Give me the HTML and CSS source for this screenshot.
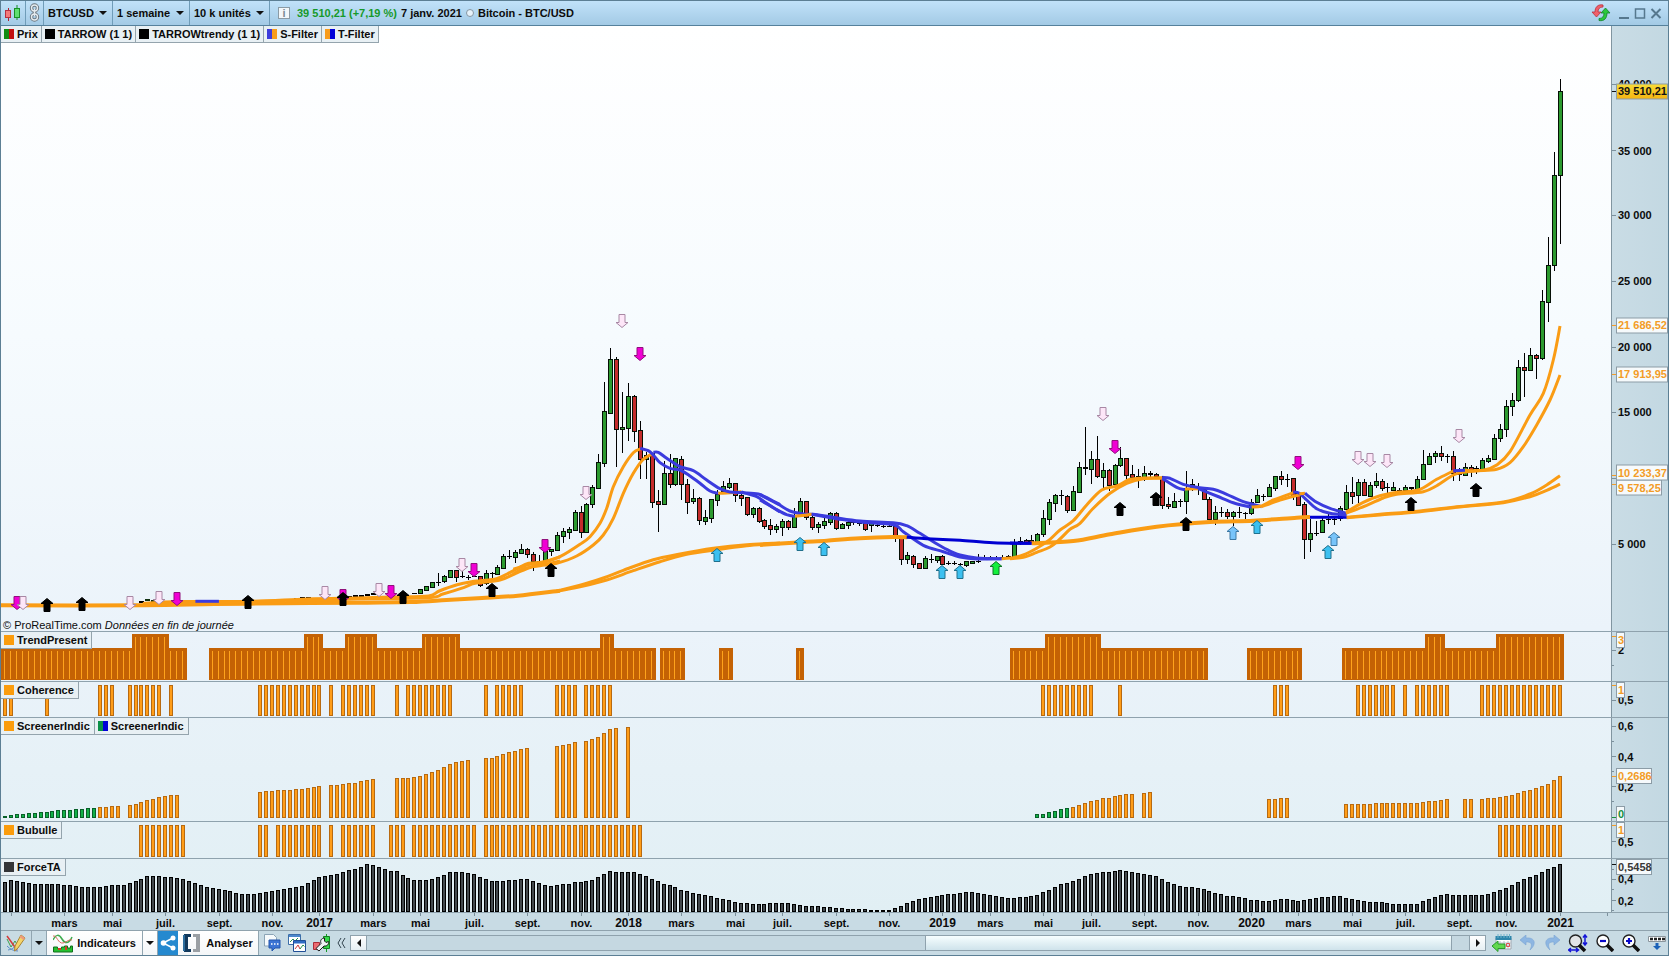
FILE: index.html
```html
<!DOCTYPE html>
<html lang="fr">
<head>
<meta charset="utf-8">
<title>Bitcoin - BTC/USD</title>
<link rel="stylesheet" href="styles.css">
</head>
<body>
<div class="window">
  <header class="topbar">
    <button class="cell icon-cell" aria-label="Style de graphique">
      <svg width="18" height="18" viewBox="0 0 18 18"><path d="M4.500 4v13" stroke="#b02030"/><rect x="1.500" y="6.500" width="5" height="7" fill="#f47a7a" stroke="#b83040"/><path d="M13 1v15" stroke="#189028"/><rect x="10.500" y="4.500" width="5" height="9" fill="#5fe070" stroke="#189028"/></svg>
    </button>
    <button class="cell link-cell" aria-label="Lier">
      <svg width="11" height="19" viewBox="0 0 11 19" fill="none"><g stroke="#6d7880" stroke-width="3.400"><rect x="2.500" y="2" width="6" height="6" rx="3"/><rect x="2.500" y="11" width="6" height="6" rx="3"/><path d="M5.500 6v7"/></g><g stroke="#e4ebef" stroke-width="1.400"><rect x="2.500" y="2" width="6" height="6" rx="3"/><rect x="2.500" y="11" width="6" height="6" rx="3"/><path d="M5.500 6v7"/></g></svg>
    </button>
    <label class="cell pick"><select aria-label="Valeur"><option>BTCUSD</option></select></label>
    <label class="cell pick"><select aria-label="Unité de temps"><option>1 semaine</option></select></label>
    <label class="cell pick"><select aria-label="Historique"><option>10 k unités</option></select></label>
    <div class="quote">
      <button class="info" aria-label="Informations">i</button>
      <span class="up">39 510,21 (+7,19 %)</span>
      <span>7 janv. 2021</span>
      <i class="dot"></i>
      <span>Bitcoin - BTC/USD</span>
    </div>
    <div class="wincontrols">
      <button aria-label="Actualiser"><svg width="20" height="18" viewBox="0 0 20 18"><path d="M12 1C7 0 4 3 4 8H1l4.500 5L10 8H7c0-3 1.500-5 5-5z" fill="#f0606a" stroke="#b82e3c" stroke-width=".8"/><path d="M8 16.500c5 1 8-2 8-7.500h3l-4.500-5L10 9h3c0 3.500-1.500 5.500-5 5.500z" fill="#2cc83c" stroke="#12802a" stroke-width=".8"/></svg></button>
      <button aria-label="Réduire"><svg width="12" height="14" viewBox="0 0 12 14"><path d="M1 12h10" stroke="#56788e" stroke-width="2"/></svg></button>
      <button aria-label="Agrandir"><svg width="12" height="14" viewBox="0 0 12 14"><path d="M1.500 3h9v9h-9z" fill="none" stroke="#56788e" stroke-width="1.500"/></svg></button>
      <button aria-label="Fermer"><svg width="12" height="14" viewBox="0 0 12 14"><path d="M1.500 3l9 9m0-9l-9 9" stroke="#56788e" stroke-width="2"/></svg></button>
    </div>
  </header>

  <main class="panes">
    <section class="pane price">
      <ul class="legend">
        <li><i class="sw prix"></i>Prix</li><li><i class="sw black"></i>TARROW (1 1)</li><li><i class="sw black"></i>TARROWtrendy (1 1)</li><li><i class="sw sfilter"></i>S-Filter</li><li><i class="sw tfilter"></i>T-Filter</li>
      </ul>
      <svg class="plot" id="price" viewBox="0 26 1611 605" preserveAspectRatio="none"></svg>
      <svg class="axis" id="price-axis"></svg>
      <p class="credit">© ProRealTime.com <em>Données en fin de journée</em></p>
    </section>
    <section class="pane trend">
      <ul class="legend"><li><i class="sw orange"></i>TrendPresent</li></ul>
      <svg class="plot" id="trend" viewBox="0 632 1611 49" preserveAspectRatio="none"></svg>
      <svg class="axis" id="trend-axis"></svg>
    </section>
    <section class="pane coherence">
      <ul class="legend"><li><i class="sw orange"></i>Coherence</li></ul>
      <svg class="plot" id="coherence" viewBox="0 682 1611 35" preserveAspectRatio="none"></svg>
      <svg class="axis" id="coherence-axis"></svg>
    </section>
    <section class="pane screener">
      <ul class="legend"><li><i class="sw orange"></i>ScreenerIndic</li><li><i class="sw greenblue"></i>ScreenerIndic</li></ul>
      <svg class="plot" id="screener" viewBox="0 718 1611 103" preserveAspectRatio="none"></svg>
      <svg class="axis" id="screener-axis"></svg>
    </section>
    <section class="pane bubulle">
      <ul class="legend"><li><i class="sw orange"></i>Bubulle</li></ul>
      <svg class="plot" id="bubulle" viewBox="0 822 1611 36" preserveAspectRatio="none"></svg>
      <svg class="axis" id="bubulle-axis"></svg>
    </section>
    <section class="pane force">
      <ul class="legend"><li><i class="sw dark"></i>ForceTA</li></ul>
      <svg class="plot" id="force" viewBox="0 859 1611 53" preserveAspectRatio="none"></svg>
      <svg class="axis" id="force-axis"></svg>
    </section>
  </main>
  <div class="timeline"><svg id="time"></svg></div>

  <footer class="toolbar">
    <button class="tool draw" aria-label="Dessiner"><svg width="20" height="19" viewBox="0 0 20 19" fill="none"><path d="M1 5l4 8 4-6 3 5" stroke="#3da04a"/><path d="M2 16c5-1 8-3 10-9M1 12c3 3 6 5 11 5" stroke="#5a8fc8"/><path d="M1 2l10 14" stroke="#d23c3c" stroke-width="1.500"/><path d="M15 1l4 3-7 10-3.500 3 .5-5z" fill="#f5d468" stroke="#a98432"/><path d="M15 1l4 3-1.500 2-4-3z" fill="#ee9a7c"/></svg></button>
    <button class="tool more" aria-label="Autres outils"><i class="caret"></i></button>
    <button class="tool white indic"><svg width="20" height="20" viewBox="0 0 20 20" fill="none"><path d="M0 7c3-6 6-6 9-1s7 5 10-2" stroke="#3eac4e" stroke-width="1.500"/><path d="M0 3c4-1 5 8 10 7 4-1 6-4 9-3" stroke="#d86a5a"/><path d="M.5 14h4v1.500h4V14h3v-1h3v2h3v-2h2v6H.5z" fill="#25c030" stroke="#10701c"/><path d="M5 15h3v2H5zM12 13.500h2V17h-2z" fill="#d83a28"/></svg>Indicateurs</button>
    <button class="tool white indic-more" aria-label="Liste des indicateurs"><i class="caret"></i></button>
    <button class="tool share" aria-label="Partager"><svg width="16" height="16" viewBox="0 0 16 16"><path d="M13 3L3 8l10 5" fill="none" stroke="#fff" stroke-width="1.500"/><circle cx="13" cy="3" r="2.500" fill="#fff"/><circle cx="3.500" cy="8" r="2.800" fill="#fff"/><circle cx="13" cy="13" r="2.500" fill="#fff"/></svg></button>
    <button class="tool white analyse"><svg width="18" height="18" viewBox="0 0 18 18"><path d="M8 0H1v18h7v-3H5V3h3z" fill="#12395c"/><path d="M0 1h2v16H0z" fill="#2c6c9c"/><path d="M10 0h7v18h-7v-3h3V3h-3z" fill="#9a9fa4"/></svg>Analyser</button>
    <div class="icons">
      <button aria-label="Commentaires"><svg width="17" height="18" viewBox="0 0 17 18"><path d="M.5.500h9l3 3V12H.5z" fill="#f6fafc" stroke="#8ba4b6"/><path d="M5 6h11v8h-5l-3 3v-3H5z" fill="#3c74d4" stroke="#2456ac"/><path d="M7 10h1.500m1.500 0h1.500m1.500 0h1.500" stroke="#fff" stroke-width="1.600"/></svg></button>
      <button aria-label="Fenêtres"><svg width="18" height="18" viewBox="0 0 18 18"><path d="M.5.500h12v10H.5z" fill="#fff" stroke="#3c6ea8"/><path d="M1 1h11v2H1z" fill="#4d88cc"/><path d="M2 8l3-3 2 2 3-3" fill="none" stroke="#2c9050"/><path d="M5.500 6.500h12v11h-12z" fill="#fff" stroke="#204f96"/><path d="M6 7h11v2.500H6z" fill="#2f6cc4"/><path d="M7 15l3-4 2 4" fill="none" stroke="#cc3c3c"/><path d="M12 15l3-4 1.500 1.500" fill="none" stroke="#28904a"/></svg></button>
      <button aria-label="Réglages"><svg width="17" height="18" viewBox="0 0 17 18"><path d="M13.500 0v18" stroke="#159a26"/><path d="M10.500 2.500h6v12h-6z" fill="#35d84a" stroke="#128020"/><path d="M.5 8.500h6v7h-6z" fill="#ec6a70" stroke="#a82c38"/><path d="M3 14.500l5-5c-1-3 0-5 3.500-5.500v3l1.500 1.500 2.500-1c.5 3-1.500 5-4.500 4.500L6 17z" fill="#eef2f4" stroke="#1c1c1c"/></svg></button>
      <button class="chevrons" aria-label="Replier"><svg width="9" height="10" viewBox="0 0 9 10"><path d="M4 0L1 5l3 5M8 0L5 5l3 5" fill="none" stroke="#34454f"/></svg></button>
    </div>
    <div class="scroll">
      <button aria-label="Reculer"><i class="tri left"></i></button>
      <div class="track" role="scrollbar" aria-controls="price" aria-orientation="horizontal" aria-valuenow="97"><div class="thumb"></div></div>
      <button aria-label="Avancer"><i class="tri right"></i></button>
    </div>
    <div class="nav">
      <button aria-label="Aller à la date"><svg width="20" height="18" viewBox="0 0 20 18"><path d="M4 4h15v11H4z" fill="#fff" stroke="#a0a8b0"/><path d="M3.500 2h16v4h-16z" fill="#2e86ac"/><path d="M6 0v4m3-4v4m3-4v4m3-4v4m2.500-4v4" stroke="#70b4cc"/><path d="M8 7v8m4-8v8m4-8v8M4 9h15M4 12h15" stroke="#b8c0c8"/><path d="M14.500 9.500h3v3h-3z" fill="none" stroke="#e05050"/><path d="M0 12l6-5v3h7v4.500H6v3z" fill="#62d84e" stroke="#2a9a2c"/></svg></button>
      <button aria-label="Annuler"><svg width="16" height="16" viewBox="0 0 16 16"><path d="M6 0L0 5l6 5V7c5-.500 7 2 4 8 7-6 5-13-4-12z" fill="#8db6e2" stroke="#7ba4d4" stroke-width=".6"/></svg></button>
      <button aria-label="Rétablir"><svg width="16" height="16" viewBox="0 0 16 16"><path d="M10 0l6 5-6 5V7c-5-.500-7 2-4 8-7-6-5-13 4-12z" fill="#8db6e2" stroke="#7ba4d4" stroke-width=".6"/></svg></button>
      <button aria-label="Zoom automatique"><svg width="20" height="19" viewBox="0 0 20 19"><circle cx="7.500" cy="7" r="6" fill="#e2e4e6" stroke="#222" stroke-width="1.400"/><path d="M11 11l6 6" stroke="#111" stroke-width="3.500"/><path d="M17 1v10M15 3.500L17 1l2 2.500M15 8.500l2 2.500 2-2.500M1 16h9M3 14l-2.500 2L3 18M8 14l2.500 2L8 18" stroke="#1414d8" stroke-width="1.500" fill="none"/></svg></button>
      <button aria-label="Zoom arrière"><svg width="18" height="18" viewBox="0 0 18 18"><circle cx="7" cy="7" r="6" fill="#fff" stroke="#222" stroke-width="1.400"/><path d="M11 11l6 6" stroke="#111" stroke-width="3.500"/><path d="M4 7h6" stroke="#0808c8" stroke-width="2.200"/></svg></button>
      <button aria-label="Zoom avant"><svg width="18" height="18" viewBox="0 0 18 18"><circle cx="7" cy="7" r="6" fill="#fff" stroke="#222" stroke-width="1.400"/><path d="M11 11l6 6" stroke="#111" stroke-width="3.500"/><path d="M4 7h6M7 4v6" stroke="#0808c8" stroke-width="2.200"/></svg></button>
      <button aria-label="Masquer la barre"><svg width="18" height="16" viewBox="0 0 18 16"><path d="M.5 1.500h17v5H.5z" fill="#fff" stroke="#8a959c"/><path d="M2 4h3m1 0h3m1 0h3m1 0h3" stroke="#222" stroke-width="2.600"/><path d="M7.500 8h3v3H13l-4 4-4-4h2.500z" fill="#1c62b8"/></svg></button>
    </div>
  </footer>
</div>
<script src="app.js"></script>
</body>
</html>
```
FILE: styles.css
```css
* { box-sizing: border-box; }
body { margin: 0; font: bold 11px/14px "Liberation Sans", Arial, sans-serif; color: #0c0c0c; }
button, select { font: inherit; color: inherit; border: 0; padding: 0; margin: 0; background: none; }
button { display: flex; align-items: center; justify-content: center; cursor: pointer; }
svg { display: block; flex: none; }

.window { position: relative; display: flex; flex-direction: column; height: 100vh; overflow: hidden; background: #c8dbe4; }
.window::after { content: ""; position: absolute; inset: 0; border: 1px solid #5c7f94; pointer-events: none; }

/* Title bar */
.topbar { display: flex; flex: none; height: 26px; border-bottom: 1px solid #56819c; background: linear-gradient(#c2e3fa, #a3cae5); }
.cell { display: flex; align-items: center; border-right: 1px solid #6f9cb8; }
.icon-cell { width: 26px; }
.link-cell { width: 18px; }
.pick { gap: 5px; padding: 0 5px 0 4px; }
.pick select { appearance: none; outline: 0; }
.pick::after, .caret { content: ""; border: 4px solid transparent; border-top-color: #111; border-bottom: 0; }
.quote { display: flex; align-items: center; gap: 4px; padding-left: 8px; }
.up { color: #16992a; }
.info { width: 12px; height: 12px; margin-right: 3px; border: 1px solid #8b9ba5; background: #f2f7fa; color: #7c8a94; }
.dot { width: 8px; height: 8px; border: 1px solid #8596a2; border-radius: 50%; background: #e6f2fa; }
.wincontrols { display: flex; align-items: center; gap: 4px; margin-left: auto; padding-right: 7px; }
.wincontrols button:first-child { margin-right: 3px; }

/* Chart panes */
.panes { flex: 1; display: flex; flex-direction: column; min-height: 0; background: linear-gradient(#fff, #f6fbfe 35%, #ebf3fa 68%, #e1eff4); }
.pane { position: relative; display: grid; grid-template-columns: 1fr 58px; grid-template-rows: 1fr; flex: none; border-top: 1px solid #8fa2ad; }
.price { flex: 1; border-top: 0; min-height: 0; }
.trend { height: 50px; }
.coherence { height: 36px; }
.screener { height: 104px; }
.bubulle { height: 37px; }
.force { height: 54px; }
.plot, .axis { width: 100%; height: 100%; min-height: 0; }
.axis { overflow: hidden; border-left: 1px solid #8195a0; background: linear-gradient(90deg, #c9dce5, #c3d8e2); }
.legend { position: absolute; top: 0; left: 1px; display: flex; margin: 0; padding: 0; list-style: none; }
.legend li { display: flex; align-items: center; gap: 3px; height: 17px; padding: 0 4px 0 3px; border: solid #94a4ad; border-width: 0 1px 1px 0; background: #e8f0f4; }
.price .legend li { padding: 0 3px; }
.sw { width: 10px; height: 10px; }
.prix { background: linear-gradient(90deg, #128c12 50%, #c01010 50%); }
.black { background: #000; }
.sfilter { background: linear-gradient(90deg, #3c3cdc 50%, #f89c1c 50%); }
.tfilter { background: linear-gradient(90deg, #f89c1c 50%, #0000d8 50%); }
.orange { background: #fb9c0c; }
.greenblue { background: linear-gradient(90deg, #0c9048 50%, #0000d8 50%); }
.dark { background: #333538; }
.credit { position: absolute; left: 3px; bottom: 0; margin: 0; font-weight: normal; line-height: 11px; }

.axis text, .timeline text { font: bold 11px "Liberation Sans", Arial, sans-serif; fill: #0c0c0c; }
.axis .tag-text { fill: #f39c26; }
.axis .on-yellow { fill: #111; }
.axis .green { fill: #16903c; }
.axis .gray { fill: #383838; }
.timeline { flex: none; height: 18px; border-top: 1px solid #8fa2ad; }
.timeline svg { width: 100%; height: 17px; }
.timeline text { text-anchor: middle; }
.timeline .year { font-size: 12px; }

/* Bottom toolbar */
.toolbar { display: flex; align-items: center; flex: none; height: 26px; padding: 0 3px 1px 1px; border-top: 1px solid #8fa2ad; }
.tool { height: 24px; border-right: 1px solid #91a5b0; }
.draw { width: 31px; }
.more { width: 15px; }
.white { background: linear-gradient(#fff, #f3f6f8); }
.indic { width: 96px; gap: 4px; }
.indic-more { width: 15px; }
.share { width: 20px; border: 0; background: #2589cf; }
.analyse { width: 81px; gap: 5px; }
.icons { display: flex; align-items: center; gap: 7px; padding: 0 3px 0 5px; }
.chevrons { padding-right: 1px; }
.scroll { display: flex; flex: 1; height: 16px; border: 1px solid #8fa2ad; }
.scroll button { width: 15px; background: linear-gradient(#fff, #e6eff3); }
.track { flex: 1; display: flex; border: solid #8fa2ad; border-width: 0 1px; background: #c5d8e1; }
.thumb { flex: 1; margin: 0 1.500% 0 50.600%; border: solid #8fa2ad; border-width: 0 1px; background: linear-gradient(#f6feff, #cfe3eb); }
.tri { border: 4px solid transparent; }
.left { border-right-color: #111; border-left: 0; }
.right { border-left-color: #111; border-right: 0; }
.nav { display: flex; align-items: center; gap: 8px; padding-left: 6px; }
```
FILE: app.js
```js
const ORANGE = '#fa9c14', SBLUE = '#3b3bde', TBLUE = '#0000d2';
/* Fifteen weeks take 89 units: fourteen steps of six and one of five. */
const x = i => {
  const turn = Math.floor((i - 8) / 15);
  return 52 + turn * 89 + (i - 8 - turn * 15) * 6;
};
const el = id => document.getElementById(id);
const rect = (l, t, w, h, fill, extra = '') =>
  `<rect x="${l}" y="${t}" width="${w}" height="${h}" fill="${fill}" ${extra}/>`;

/* Weekly candles: each block has a first index, an origin and rows of
   high, top, bottom, low (thirds of a unit) and direction. */
const blocks = [
  [69, 500, `278 279 281 282 g|267 267 279 281 g|258 258 270 272 g|246 246 260 264 g|220 245 247 257 d|224 229 244 248 g|211 211 231 232 g|211 211 231 245 r|213 229 231 233 d|226 230 231 239 d|226 229 231 232 d|229 229 255 260 r|211 219 250 254 g|215 220 221 233 d|195 202 221 224 g|163 169 203 206 g|150 168 170 178 d|151 156 170 188 g|131 147 158 160 g|144 147 163 173 r|156 163 184 212 r|165 182 184 186 d|150 153 183 185 g|147 148 154 167 g`],
  [93, 300, `697 706 749 749 g|684 694 708 728 g|682 687 695 718 g|630 637 689 692 g|618 637 697 713 r|609 613 697 700 g|555 562 613 623 g|463 487 563 563 g|246 334 488 500 g|144 178 338 338 g|172 178 386 500 r|276 382 386 458 g|249 289 383 423 g|285 289 392 425 r|363 391 477 537 r|455 466 476 537 g|458 460 605 623 r|570 603 611 696 r|483 520 611 612 g|462 520 551 563 r|474 475 551 558 g|469 478 553 600 r|538 553 605 642 r|568 594 604 612 g|591 594 661 674 r|630 652 662 674 g|598 598 653 668 g|570 583 599 617 g|543 559 572 578 g|535 549 560 566 g|550 550 586 606 r|578 586 593 617 r|590 592 641 647 r|620 625 641 654 g|620 625 662 668 r|657 661 678 688 r|657 676 686 704 r|672 679 686 699 g`],
  [131, 440, `238 243 260 288 g|240 243 260 270 r|205 225 261 261 g|174 184 218 222 g|183 184 232 240 r|228 232 261 270 r|245 253 261 278 g|235 243 255 266 g|216 220 246 255 g|216 220 263 270 r|248 253 263 266 g|240 245 256 266 g|240 247 250 256 g|240 248 250 258 r|248 250 266 272 r|245 250 256 276 g|250 256 257 262 d|250 257 258 264 d|253 258 260 262 d|255 259 290 305 r|290 294 356 375 r|335 346 356 372 g|346 347 371 384 r|370 370 383 386 r|347 355 384 384 g|343 356 357 368 d|347 349 360 370 g|346 349 371 376 r|364 370 371 375 d|364 370 371 375 d|369 373 375 378 d|362 364 374 380 g|363 364 368 370 g|342 362 366 370 g|346 352 356 360 g|348 352 355 359 d|348 353 355 360 d|346 352 354 358 d|344 348 350 354 d|298 306 350 352 g|290 304 306 315 d|297 300 305 307 r|285 299 305 307 r|280 283 305 305 g|211 235 283 290 g|178 186 236 255 g|162 166 188 215 g|150 166 167 195 d|164 167 209 218 r|138 154 209 212 g`],
  [181, 400, `186 202 275 278 g|81 202 206 225 d|154 178 206 252 g|108 178 227 234 r|190 211 230 264 g|207 211 255 272 r|192 196 253 256 g|142 175 196 200 g|175 175 224 238 r|194 223 231 238 r|206 229 233 263 g|198 220 232 244 g|214 220 224 230 d|218 223 229 238 r|229 230 314 326 r|290 312 318 326 r|278 303 320 322 g|297 304 306 320 d|212 265 304 342 g|238 253 262 272 r|248 262 268 285 r|262 266 296 300 r|290 296 358 360 r|318 337 358 374 g|322 335 340 350 d|328 335 349 356 r|332 335 349 378 g|320 336 340 355 d|335 338 341 356 d|296 306 340 344 g|267 286 307 310 g|282 287 290 302 d|252 262 289 291 g|229 229 263 272 g|213 229 238 254 r|222 236 238 260 d|234 235 288 300 r|275 278 314 316 r|306 313 418 477 r|356 400 418 456 g|362 398 401 407 d|352 361 397 398 g|340 356 361 371 g|350 356 359 374 d|318 325 355 363 g`],
  [226, 300, `555 577 626 630 g|531 577 587 611 r|538 547 586 608 g|537 547 586 588 r|545 556 587 590 g|520 544 556 563 g|538 544 563 572 r|549 562 564 578 d|545 562 570 574 g|565 570 573 575 d|555 562 571 573 g|560 562 566 570 d|528 538 566 568 g|450 493 538 540 g|460 469 493 496 g|454 460 469 490 g|438 460 469 482 r|462 469 471 490 d|454 469 520 543 r|505 520 526 542 d|490 500 524 528 g|495 500 507 530 r|498 505 507 522 d|475 481 507 510 g|465 475 482 490 g|402 415 476 480 g|373 388 415 425 g|300 319 388 410 g|280 301 319 347 g|180 202 301 305 g|159 202 211 290 r|145 166 211 213 g|163 166 175 237 r|-30 4 175 181 g|-189 -105 5 65 g|-444 -374 -105 -88 g|-663 -626 -374 -169 g`]
];

function candle(i, h, t, b, l, kind) {
  const c = x(i);
  let s = rect(c, h, 1, Math.max(1, l - h), '#000');
  if (kind === 'd' || b - t < 2) return s + rect(c - 2, t, 5, Math.max(1, b - t), '#000');
  s += rect(c - 2, t, 5, b - t + 1, '#061006');
  return s + rect(c - 1, t + 1, 3, Math.max(1, b - t - 1), kind === 'g' ? '#2c9a2f' : '#c42c2c');
}
let price = '';
for (const [i, t] of [[23, 601], [49, 598], [50, 597], [51, 597], [54, 597], [57, 597], [58, 596], [59, 595], [60, 595], [61, 594], [62, 593], [65, 598]]) {
  price += rect(x(i) - 2, t, 5, 2, '#000');
}
price += rect(145, 599, 5, 2, '#103010') + rect(151, 600, 5, 2, '#103010');
for (const [first, base, rows] of blocks) {
  rows.split('|').forEach((row, k) => {
    const v = row.split(' ');
    const y = v.slice(0, 4).map(n => Math.round(base + n / 3));
    price += candle(first + k, ...y, v[4]);
  });
}

/* Smooth curve through points given in thirds relative to an origin. */
function curve(ox, oy, sx, pts, color, w = 3) {
  const p = pts.split(' ').map(q => { const [a, b] = q.split(','); return [ox + a / sx, oy + b / 3]; });
  let d = `M${p[0][0].toFixed(1)} ${p[0][1].toFixed(1)}`;
  for (let k = 0; k < p.length - 1; k++) {
    const a = p[k - 1] || p[k], b = p[k], c = p[k + 1], e = p[k + 2] || c;
    d += `C${[b[0] + (c[0] - a[0]) / 6, b[1] + (c[1] - a[1]) / 6, c[0] - (e[0] - b[0]) / 6, c[1] - (e[1] - b[1]) / 6, c[0], c[1]].map(n => n.toFixed(1)).join(' ')}`;
  }
  return `<path d="${d}" fill="none" stroke="${color}" stroke-width="${w}"/>`;
}
const A = (p, c, w) => curve(0, 500, 2.8, p, c, w);
const B = (p, c, w) => curve(480, 300, 3, p, c, w);
const C = (p, c, w) => curve(760, 440, 3, p, c, w);
const D = (p, c, w) => curve(1010, 400, 3, p, c, w);
const E = (p, c, w) => curve(1330, 300, 3, p, c, w);
price += [
  A('0,316 400,316 600,312 800,310 1000,308 1150,306 1250,300 1350,294 1450,287 1568,272', ORANGE, 4),
  A('400,312 500,306 700,306 800,304', ORANGE, 4),
  A('400,314 500,308 700,304 860,297 1000,294 1100,291 1200,288 1230,273 1280,254 1320,245 1345,242 1390,236 1420,222 1450,205 1480,190 1520,186 1568,170', ORANGE),
  A('800,304 1000,297 1200,293 1240,282 1300,262 1330,250 1400,240 1440,222 1490,200 1530,192 1568,183', ORANGE),
  A('547,304 613,304', SBLUE),
  B('230,873 300,856 370,834 430,811 520,779 600,762 700,745 800,734 900,729', ORANGE),
  B('230,874 300,860 380,840 460,812 540,785 620,763 720,748 800,737 900,731', ORANGE),
  B('100,808 150,793 190,787 240,770 300,733 330,710 360,670 380,625 400,560 430,500 460,458 481,447', ORANGE),
  B('100,822 130,806 180,797 230,790 290,768 340,735 370,705 400,655 430,580 460,520 490,478 520,460', ORANGE),
  B('481,445 505,452 520,465 540,488 570,505 600,510 630,528 660,550 690,573 715,580', SBLUE),
  B('715,580 740,579 784,575', ORANGE),
  B('520,457 535,457 560,475 600,500 640,512 680,540 720,566 750,576 790,578 835,582 870,598 900,614', SBLUE),
  B('784,576 830,590 860,610 900,636', SBLUE),
  C('55,192 90,213 130,222 160,223 220,232 300,243 400,248 440,257 480,280 520,305 560,328 600,345 650,354 725,356', SBLUE),
  C('0,164 30,180 58,194', SBLUE),
  C('0,180 40,203 80,224 105,229', SBLUE),
  C('105,229 155,223', ORANGE),
  C('155,223 230,236 300,246 400,254 430,275 490,316 550,335 600,351 650,357 725,356', SBLUE),
  C('0,315 100,308 200,302 300,295 400,291 442,292', ORANGE, 4),
  C('440,292 500,296 600,301 700,308 815,310', TBLUE),
  C('725,356 755,354', ORANGE),
  D('0,429 65,430', TBLUE),
  D('65,430 190,423 300,403 440,380 600,366 730,362 860,353 900,351', ORANGE, 4),
  D('900,352 1012,352', TBLUE),
  D('0,475 40,465 80,445 120,418 150,390 190,362 230,315 275,270 320,258 360,238 400,234 457,233', ORANGE),
  D('0,476 40,472 80,457 120,441 150,417 180,388 210,370 250,325 300,280 350,250 400,236 457,235', ORANGE),
  D('457,235 500,262 525,269', SBLUE),
  D('525,267 565,266', ORANGE),
  D('565,266 620,288 670,308 725,322', SBLUE),
  D('457,232 480,235 520,253 560,262 610,268 650,283 700,305 755,320', SBLUE),
  D('725,321 755,318 790,300 850,278', ORANGE),
  D('755,320 810,300 870,284 885,280', ORANGE),
  D('850,276 868,280 890,300 920,326 960,340 1010,345', SBLUE),
  D('868,282 885,280', ORANGE),
  D('885,280 920,307 960,325 1010,340', SBLUE),
  E('50,652 150,643 270,633 380,620 520,606 600,582 650,555 690,527', ORANGE),
  E('50,653 150,645 270,635 380,622 520,608 600,590 650,571 690,552', ORANGE),
  E('48,636 100,607 150,587 200,577 265,570 320,538 370,513', ORANGE),
  E('48,640 110,616 160,594 200,583 280,575 320,557 370,525 400,517 440,512 500,508 540,488 580,440 620,375 660,300 690,225', ORANGE),
  E('370,512 405,511', SBLUE),
  E('405,511 460,511 500,495 540,455 600,345 640,280 670,180 690,78', ORANGE)
].join('');

/* Signal arrows: centre x, top y. */
const kinds = {
  m: [1, '#f000d4', '#90107c'], p: [1, '#fde6f8', '#a888a4'], k: [0, '#000', '#000'],
  c: [0, '#3cc0f0', '#20708c'], l: [0, '#78c4fa', '#3c78a4'], g: [0, '#14f03c', '#107828']
};
const arrows = 'm17,596 p23,596 k47,598 k82,597 p130,596 p159,591 m177,592 k248,595 p325,586 m343,589 k343,592 p379,583 m391,585 k403,590 p462,558 m474,563 k492,583 m545,539 k551,563 p586,486 p622,314 m640,347 c717,548 c800,537 c824,542 c942,565 c960,565 g996,561 p1103,407 m1115,440 m1298,456 k1120,502 k1156,492 k1186,517 l1233,526 c1257,520 l1334,532 c1328,545 p1358,451 p1370,453 p1387,454 p1459,429 k1411,497 k1476,483';
for (const a of arrows.split(' ')) {
  const [down, fill, stroke] = kinds[a[0]];
  const [cx, t] = a.slice(1).split(',').map(Number);
  const d = down ? 'M-3 .5H3V8.500H6L0 13.500L-6 8.500H-3Z' : 'M-3 13.500H3V5.500H6L0 .5L-6 5.500H-3Z';
  price += `<path transform="translate(${cx},${t})" d="${d}" fill="${fill}" stroke="${stroke}" stroke-width="1"/>`;
}
el('price').innerHTML = price;

/* Histograms */
const bar = (i, t, b, edge, fill) =>
  rect(x(i) - 2, t, 4, b - t, edge, 'shape-rendering="crispEdges"') +
  (b - t > 2 ? rect(x(i) - 1, t + 1, 2, b - t - 2, fill, 'shape-rendering="crispEdges"') : '');
const ranges = s => s.split(' ').flatMap(r => {
  const [a, b = a] = r.split('-').map(Number);
  return Array.from({ length: b - a + 1 }, (_, k) => a + k);
});

const high = new Set(ranges('22-27 51-53 58-62 71-76 101-102 176-184 240-242 252-262'));
const trend = ranges('0-30 35-109 111-114 121-122 134 170-202 210-218 226-262');
el('trend').innerHTML =
  trend.map(i => rect(x(i) - 4, high.has(i) ? 634 : 648, 8, high.has(i) ? 46 : 32, '#c46204')).join('') +
  trend.map(i => { const t = high.has(i) ? 637 : 651; return rect(x(i) - 1, t, 1, 679 - t, '#ffa31c'); }).join('');

el('coherence').innerHTML = ranges('0-1 7 16-18 21-26 28 43-53 55 57-62 66 68-75 81 83-87 93-96 98-102 175-183 188 214-216 228-234 236 238-243 249-262')
  .map(i => bar(i, 685, 716, '#b86a10', '#ff9d18')).join('');
el('bubulle').innerHTML = ranges('23-30 43-44 46-53 55 57-62 65-67 69-79 81-107 252-262')
  .map(i => bar(i, 825, 857, '#b86a10', '#ff9d18')).join('');

/* Bar tops in thirds above the given origin, keyed by first index. */
const screener = [
  [0, 560, [768, 765, 763, 762, 760, 759, 757, 757, 754, 751, 751, 750, 748, 747, 745, 744, 742, 742, 739, 738]],
  [21, 560, [736, 733, 727, 721, 718, 712, 709, 706, 706]],
  [43, 560, [697, 694, 694, 691, 691, 690, 688, 688, 685, 682, 679]],
  [55, 560, [676, 676, 673, 670, 670, 664, 661, 658]],
  [66, 560, [655, 655, 655, 652, 649, 643, 637, 631, 622, 613, 607, 604, 601]],
  [81, 560, [595, 595, 589, 583, 577, 574, 568, 565]],
  [93, 600, [439, 436, 433, 427]], [98, 600, [424, 418, 412, 400, 388, 385]], [105, 600, [382]],
  [174, 600, [643, 643, 637, 634, 628, 625, 622, 616, 610, 604, 601, 595, 595, 589, 586, 583, 583]],
  [192, 600, [580, 577]], [213, 600, [598, 598, 595, 595]],
  [226, 600, [613, 613, 613, 613, 613, 610, 610, 610, 610, 610, 610, 610, 610, 607, 604, 604, 601, 598]],
  [246, 600, [598, 598]],
  [249, 600, [598, 595, 595, 592, 589, 586, 580, 574, 571, 565, 559, 553, 541, 529]]
];
el('screener').innerHTML = screener.flatMap(([first, base, tops]) => tops.map((t, k) => {
  const i = first + k, green = i < 16 || (i > 173 && i < 180);
  return bar(i, Math.round(base + t / 3), 818, green ? '#086028' : '#b86a10', green ? '#12b048' : '#ff9d18');
})).join('');

const force = [
  [0, 560, [966, 961, 964, 967, 969, 972, 973, 973, 973, 973, 975, 975, 978, 982, 982, 982, 982, 979, 976, 976, 975, 970, 964, 958, 949, 949, 949, 952, 952, 954, 958, 964, 970, 976, 982, 985, 988, 991, 994, 1000, 1003, 1003, 1003, 1000, 997, 994, 991, 988, 985, 982, 979, 970, 961, 952, 949, 946, 943, 937, 931, 928, 921, 912, 915, 921, 928, 934, 934, 946, 955, 961, 961, 961, 958, 952, 946, 937, 937, 937, 940, 943, 952, 958, 964, 964, 964, 961, 961, 958, 958, 964, 970]],
  [91, 600, [856, 858, 856, 853, 853, 847, 847, 844, 841, 832, 823, 814, 817, 817, 817, 817, 823, 829, 838, 844, 853, 856, 862, 871, 874, 880, 883, 886, 889, 895, 898, 901, 907, 910, 910, 913, 913, 913, 910, 910, 910, 910, 913, 916, 919, 919, 919, 922, 922, 925, 925, 928, 928, 928, 928, 931, 931, 931, 931, 925, 919, 910, 904, 898, 895, 892, 889, 886, 883, 883, 880, 877, 877, 880, 883, 886, 889, 892, 895, 895, 892, 892, 889, 886, 877, 871, 862, 853, 850, 844, 838, 829, 823, 820, 817, 817, 814, 811, 814, 817, 820, 823, 826, 829, 838, 847, 853, 859, 862, 862, 865, 868, 874, 880, 883, 889, 889, 892, 895, 901, 901, 904, 904, 901, 898, 898, 901, 904, 901, 898, 895, 892, 892, 889, 889, 895, 898, 901, 904, 907, 907, 907, 910, 913, 913, 913, 913, 913, 904, 898, 892, 886, 883, 886, 886, 886, 886, 886, 886, 883, 877, 871, 865, 856, 847, 838, 832, 826, 817, 808, 802, 793]]
];
el('force').innerHTML = force.flatMap(([first, base, tops]) =>
  tops.map((t, k) => bar(first + k, Math.round(base + t / 3), 912, '#000', '#444a4e'))).join('');

/* Value axes: labels at their height, then value tags over them. */
function axis(id, top, height, labels, ticks, tags) {
  const pc = v => `${((v - top) / height * 100).toFixed(3)}%`;
  let s = '<defs><linearGradient id="gold" x2="0" y2="1"><stop stop-color="#f8dc38"/><stop offset="1" stop-color="#f4b410"/></linearGradient></defs>';
  for (const [v, t] of labels) s += `<line x1="0" x2="4" y1="${pc(v)}" y2="${pc(v)}" stroke="#7c909c"/>${t ? `<text x="6" y="${pc(v)}" dy="4">${t}</text>` : ''}`;
  for (const v of ticks) s += `<line x1="0" x2="2" y1="${pc(v)}" y2="${pc(v)}" stroke="#7c909c"/>`;
  for (const [v, t, cls, w, mark] of tags) {
    const gold = cls === 'on-yellow';
    s += `<line x1="0" x2="4" y1="${pc(mark)}" y2="${pc(mark)}" stroke="${cls === 'tag-text' ? '#f39c26' : cls === 'green' ? '#16903c' : '#111'}"/>` +
      `<svg y="${pc(v)}" overflow="visible"><rect x="4.500" y="-7.500" width="${w}" height="15" fill="${gold ? 'url(#gold)' : '#f6fafc'}" stroke="#8c9ca6"/><text x="6" y="4" class="${cls}">${t}</text></svg>`;
  }
  el(id).innerHTML = s;
}
const O = 'tag-text';
axis('price-axis', 26, 605, [[84.5, '40 000'], [150.5, '35 000'], [215.5, '30 000'], [281.5, '25 000'], [347.5, '20 000'], [412.5, '15 000'], [478.5, ''], [544.5, '5 000']], [],
  [[91.5, '39 510,21', 'on-yellow', 51, 91.5], [325.5, '21 686,52', O, 51, 325.5], [374.5, '17 913,95', O, 51, 374.5], [487.5, '9 578,25', O, 45, 484.5], [472.5, '10 233,37', O, 51, 475.5]]);
axis('trend-axis', 632, 49, [[650.5, '2']], [665.5], [[640, '3', O, 8, 636.5]]);
axis('coherence-axis', 682, 35, [[700.5, '0,5']], [], [[690, '1', O, 8, 685.5]]);
axis('screener-axis', 718, 103, [[726.5, '0,6'], [756.5, '0,4'], [786.5, '0,2']], [741.5, 771.5, 801.5], [[776, '0,2686', O, 35, 776.5], [814, '0', 'green', 8, 817.5]]);
axis('bubulle-axis', 822, 36, [[841.5, '0,5']], [], [[830, '1', O, 8, 825.5]]);
axis('force-axis', 859, 53, [[879.5, '0,4'], [900.5, '0,2']], [869.5, 889.5, 910.5], [[867, '0,5458', 'gray', 35, 864.5]]);

/* Time axis */
const times = '11: 64:mars 112:mai 165:juil. 219:sept. 272:nov. 319:2017 373:mars 420:mai 474:juil. 527:sept. 581:nov. 628:2018 681:mars 735:mai 782:juil. 836:sept. 889:nov. 942:2019 990:mars 1043:mai 1091:juil. 1144:sept. 1198:nov. 1251:2020 1298:mars 1352:mai 1405:juil. 1459:sept. 1506:nov. 1560:2021 1607:';
el('time').innerHTML = times.split(' ').map(q => {
  const [p, t] = q.split(':');
  const px = `${((+p + 0.5) / 1669 * 100).toFixed(3)}%`;
  return `<line x1="${px}" x2="${px}" y1="0" y2="3" stroke="#7c909c"/>${t ? `<text x="${px}" y="14" class="${/^2/.test(t) ? 'year' : ''}">${t}</text>` : ''}`;
}).join('');
```
